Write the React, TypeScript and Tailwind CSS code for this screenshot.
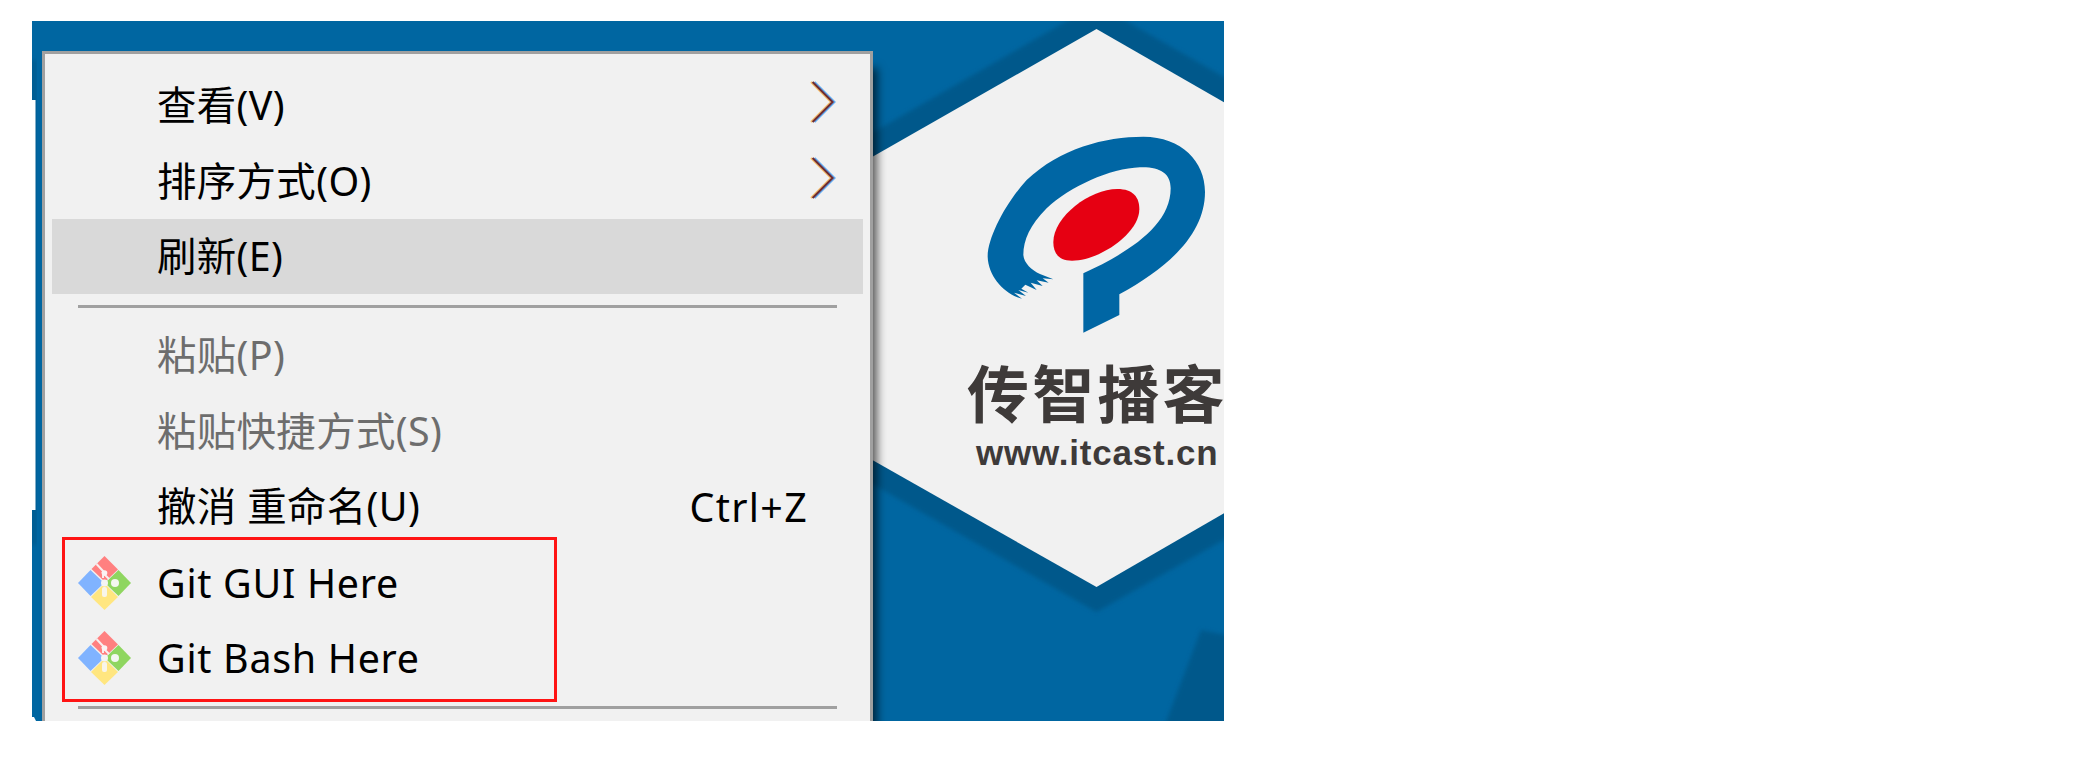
import type { ReactNode } from 'react';

function GitIcon() {
  return (
    <svg className="mt-[1px] h-[54px] w-[53px]" viewBox="0 0 53 54">
      <path d="M26.500 0L40 13.500L29 24L25 24L13.500 13Z" fill="#ff8080" />
      <path d="M12.500 14L24 25V29L12.500 40L0 27Z" fill="#80b3ff" />
      <path d="M40.500 14L53 27L40.500 40L29 29V25Z" fill="#8fd660" />
      <path d="M24 30H29L40 41L26.500 54L13 41Z" fill="#ffe680" />
      <path d="M18.500 8L25 15V22" fill="none" stroke="#f8eeee" strokeWidth="2" />
      <path d="M24 16L31 23" stroke="#f6f1f1" strokeWidth="2" />
      <circle cx="26.500" cy="17" r="2.800" fill="#fbf3f3" />
      <circle cx="26.500" cy="27" r="3.500" fill="#f4f4f4" />
      <rect x="24" y="31" width="5" height="10" rx="2" fill="#f8f5ea" />
      <circle cx="37" cy="27" r="4" fill="#f4f7f1" />
    </svg>
  );
}

function Chevron() {
  return (
    <svg className="mb-[7px] h-[42px] w-[26px]" viewBox="0 0 26 42" fill="none" strokeWidth="2">
      <path d="M1 1L21 21L1 41" stroke="#f5bd6c" />
      <path d="M4.500 1L24.500 21L4.500 41" stroke="#5fa8f0" />
      <path d="M2.600 1L22.600 21L2.600 41" stroke="#6e2c34" />
    </svg>
  );
}

type RowProps = { label: string; icon?: ReactNode; end?: ReactNode; active?: boolean; disabled?: boolean; latin?: boolean };

function Row({ label, icon, end, active, disabled, latin }: RowProps) {
  return (
    <div className={`flex h-[75.4px] items-center pr-[27px] ${active ? 'bg-[#d9d9d9]' : ''} ${disabled ? 'text-[#6d6d6d]' : 'text-black'}`}>
      <div className="flex w-[105px] shrink-0 pl-[26px]">{icon}</div>
      <span className={`grow whitespace-pre ${latin ? 'pt-[2px] tracking-[0.7px]' : 'tracking-[0.4px]'}`}>{label}</span>
      {end}
    </div>
  );
}

function Separator() {
  return <div className="mr-[26px] ml-[26px] h-[3px] bg-[#a0a0a0]" />;
}

function Wallpaper() {
  return (
    <svg className="absolute inset-0 h-[700px] w-[1192px]" viewBox="32 21 1192 700">
      <defs>
        <filter id="soft" x="-10%" y="-10%" width="120%" height="120%">
          <feGaussianBlur stdDeviation="2" />
        </filter>
      </defs>
      <path d="M1096.500 4L1400 178V440L1096.500 612L790 437V180Z" fill="#00588b" filter="url(#soft)" />
      <path d="M1096.500 29L1340 169V446L1096.500 587L830 436V181Z" fill="#f1f1f1" />
      <path d="M1201 630L1230 636V730H1163Z" fill="#00588b" filter="url(#soft)" />
      <path d="M32 60H36V545H32Z" fill="#00588b" filter="url(#soft)" />
      <path d="M32 100H35.500V510H32Z" fill="#fff" />
      <path d="M32 717H34L36 721H32Z" fill="#fff" />
      <g transform="translate(860 100) scale(0.333333)">
        <path
          d="M472 592C425 572 385 525 383 470C383 410 440 305 500 240C600 145 735 110 850 110C965 110 1035 185 1035 275C1035 400 930 500 778 583V645L670 698V520C800 460 932 380 932 265C932 220 900 200 840 202C750 205 630 260 560 325C510 375 490 420 490 465C492 490 515 510 540 522L580 538L548 535L566 548L530 541L548 558L512 548L530 570L496 554L484 566L505 578L475 570L498 588L462 578L486 596Z"
          fill="#0066a4"
        />
        <path d="M772 267C820 267 838 292 838 328C838 400 720 482 636 482C596 482 580 460 580 426C580 350 690 267 772 267Z" fill="#e60012" />
      </g>
    </svg>
  );
}

export default function App() {
  return (
    <div className="h-[758px] w-full overflow-hidden bg-white pt-[21px] pl-[32px]">
      <div className="relative h-[700px] w-[1192px] overflow-hidden bg-[#0066a1]">
        <Wallpaper />
        <div className="absolute top-[332px] left-[935px] text-[#3e3a39]">
          <div className="h-[80px] font-['Noto_Sans_CJK_SC',sans-serif] text-[62px] leading-[76px] font-bold tracking-[3.2px] whitespace-nowrap">传智播客</div>
          <div className="pl-[9px] font-['Liberation_Sans',sans-serif] text-[35px] leading-[40px] font-bold tracking-[0.8px]">www.itcast.cn</div>
        </div>
        <div className="absolute top-[30px] left-[10px] h-[720px] w-[831px] border-[3px] border-[#a0a0a0] bg-[#f1f1f1] px-[7px] pt-[14px] font-['Noto_Sans','Noto_Sans_CJK_SC',sans-serif] text-[39.4px] leading-[75px] shadow-[7px_14px_9px_-3px_rgba(0,0,0,0.65)]">
          <Row label="查看(V)" end={<Chevron />} />
          <Row label="排序方式(O)" end={<Chevron />} />
          <Row label="刷新(E)" active />
          <div className="flex h-[24px] flex-col justify-center">
            <Separator />
          </div>
          <Row label="粘贴(P)" disabled />
          <Row label="粘贴快捷方式(S)" disabled />
          <Row label="撤消 重命名(U)" end={<span className="mr-[28px] pt-[1px] tracking-[1.3px]">Ctrl+Z</span>} />
          <Row label="Git GUI Here" icon={<GitIcon />} latin />
          <Row label="Git Bash Here" icon={<GitIcon />} latin />
          <div className="flex h-[24px] flex-col justify-center">
            <Separator />
          </div>
        </div>
        <div className="absolute top-[516px] left-[30px] h-[165px] w-[495px] border-[3px] border-[#ff1414]" />
      </div>
    </div>
  );
}
